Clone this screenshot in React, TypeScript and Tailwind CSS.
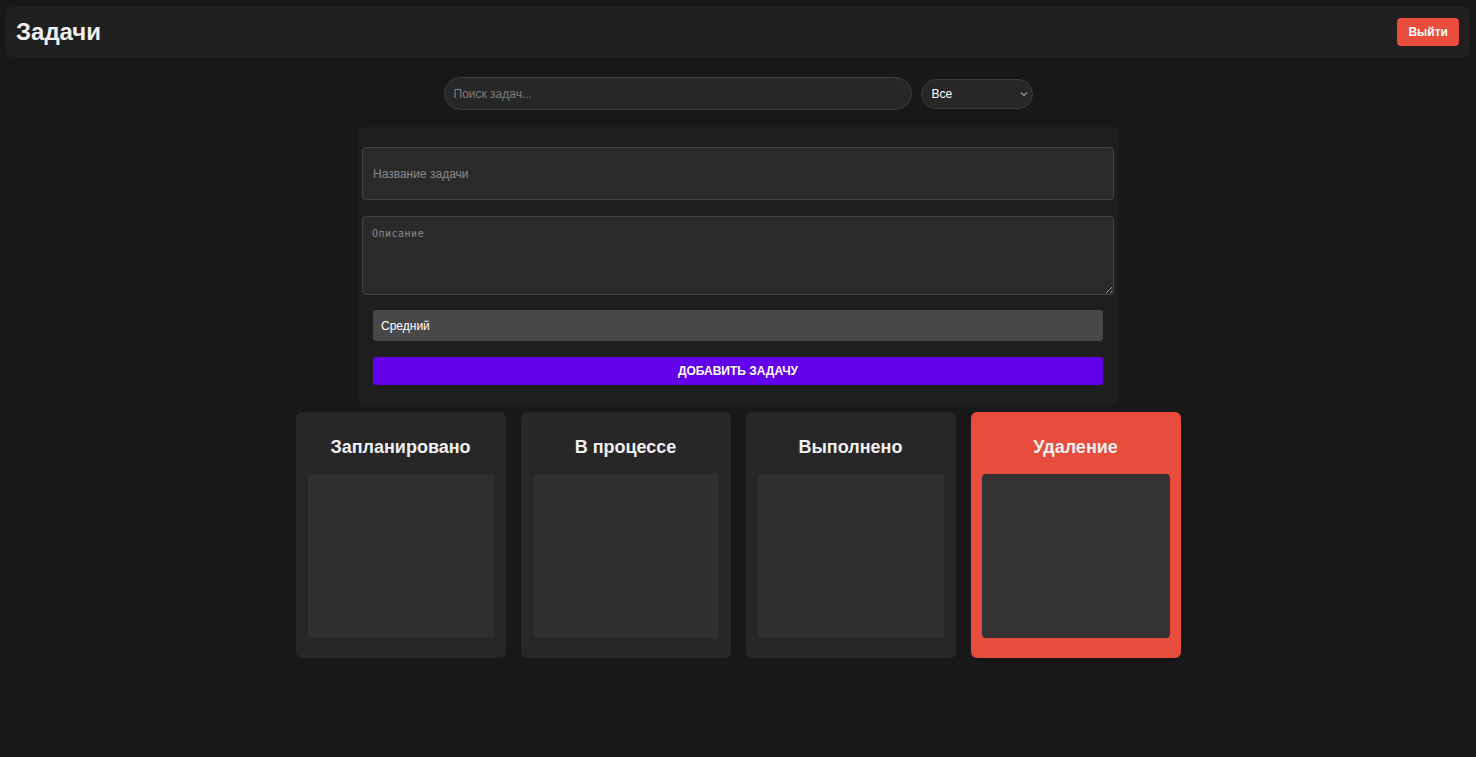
import { useState } from "react";

type Column = {
  id: string;
  title: string;
  danger?: boolean;
};

const columns: Column[] = [
  { id: "planned", title: "Запланировано" },
  { id: "progress", title: "В процессе" },
  { id: "done", title: "Выполнено" },
  { id: "delete", title: "Удаление", danger: true },
];

// Header with page title and logout button
const Header = (): JSX.Element => (
  <header className="mx-[6px] h-[50px] flex items-center justify-between rounded-md bg-[#202020] pl-[10px] pr-[11px]">
    <h1 className="text-[24px] font-bold text-[#f0f0f0]">Задачи</h1>
    <button className="h-[28px] px-[11px] rounded-[4px] bg-[#e74c3c] text-[12px] font-bold text-white">
      Выйти
    </button>
  </header>
);

const App = (): JSX.Element => {
  const [search, setSearch] = useState("");
  const [title, setTitle] = useState("");
  const [description, setDescription] = useState("");

  return (
    <div className="min-h-[757px] bg-[#181818] pt-[7px] font-['Liberation_Sans',Arial,sans-serif] text-white">
      <Header />

      {/* search + filter */}
      <div className="mt-[20px] flex items-center justify-center gap-[9px]">
        <input
          value={search}
          onChange={(e) => setSearch(e.target.value)}
          placeholder="Поиск задач..."
          className="w-[468px] h-[33px] rounded-full border border-[#3d3d3d] bg-[#272727] px-[9px] text-[12px] text-white placeholder:text-[#7c7c7c] outline-none"
        />
        <div className="relative">
          <select className="appearance-none w-[112px] h-[30px] rounded-full border border-[#3d3d3d] bg-[#272727] pl-[10px] text-[12px] text-white outline-none">
            <option>Все</option>
            <option>Запланировано</option>
            <option>В процессе</option>
            <option>Выполнено</option>
          </select>
          <svg
            className="pointer-events-none absolute right-[5px] top-[12px]"
            width="8"
            height="6"
            viewBox="0 0 8 6"
            fill="none"
          >
            <path d="M1 1.5 4 4.5 7 1.5" stroke="#9a9a9a" strokeWidth="1.2" />
          </svg>
        </div>
      </div>

      {/* new task form */}
      <div className="mx-auto mt-[17px] w-[760px] rounded-md bg-[#1e1e1e] pt-[20px] pb-[20px] pl-[4px] pr-[4px]">
        <input
          value={title}
          onChange={(e) => setTitle(e.target.value)}
          placeholder="Название задачи"
          className="block w-full h-[53px] rounded-[4px] border border-[#444] bg-[#2a2a2a] px-[10px] text-[12px] text-white placeholder:text-[#8a8a8a] outline-none"
        />
        <textarea
          value={description}
          onChange={(e) => setDescription(e.target.value)}
          placeholder="Описание"
          className="mt-[16px] block w-full h-[79px] rounded-[4px] border border-[#444] bg-[#2a2a2a] px-[9px] py-[9px] font-['DejaVu_Sans_Mono',monospace] text-[10px] tracking-[0.5px] text-white placeholder:text-[#8a8a8a] outline-none"
        />
        <div className="px-[11px]">
          <select className="appearance-none mt-[15px] block w-full h-[31px] rounded-[3px] bg-[#484848] px-[8px] text-[12px] text-white outline-none">
            <option>Средний</option>
            <option>Низкий</option>
            <option>Высокий</option>
          </select>
          <button className="mt-[16px] block w-full h-[28px] rounded-[3px] bg-[#6200ea] text-[12px] font-bold uppercase text-white">
            Добавить задачу
          </button>
        </div>
      </div>

      {/* kanban columns */}
      <div className="mt-[7px] flex justify-center gap-[15px]">
        {columns.map((col) => (
          <div
            key={col.id}
            className={
              col.danger
                ? "w-[210px] h-[246px] rounded-md bg-[#e74c3c] px-[11px] pt-[25px]"
                : "w-[210px] h-[246px] rounded-md bg-[#272727] px-[12px] pt-[25px]"
            }
          >
            <h2 className="text-center text-[18px] font-bold leading-[20px] text-[#f0f0f0]">
              {col.title}
            </h2>
            <div
              className={
                col.danger
                  ? "mt-[17px] h-[164px] rounded-[4px] bg-[#333333]"
                  : "mt-[17px] h-[164px] rounded-[4px] bg-[#303030]"
              }
            />
          </div>
        ))}
      </div>
    </div>
  );
};

export default App;
